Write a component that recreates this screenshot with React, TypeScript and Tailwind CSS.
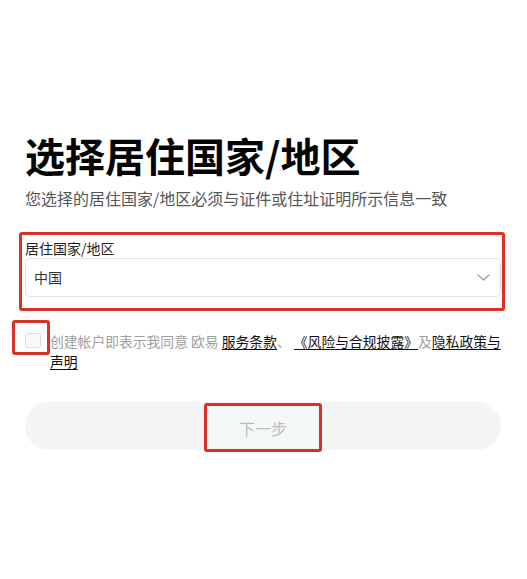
const font = { fontFamily: '"Noto Sans CJK SC", "Noto Sans", sans-serif' };

const Chevron = () => (
  <svg width="13" height="7" viewBox="0 0 13 7" fill="none">
    <path d="M1 1L6.5 6L12 1" stroke="#9a9a9a" strokeWidth="1.2" strokeLinecap="round" strokeLinejoin="round" />
  </svg>
);

export default function App() {
  return (
    <div style={font} className="h-[579px] w-[527px] bg-white pl-[25px] pr-[25px] pt-[131px]">
      <h1 className="text-[40px] font-bold leading-[48px] text-[#050505]">选择居住国家/地区</h1>
      <p className="mt-[9px] text-[16px] leading-[20px] text-[#555]">
        您选择的居住国家/地区必须与证件或住址证明所示信息一致
      </p>

      {/* highlighted field */}
      <div className="-ml-[6px] mt-[24px] w-[486px] rounded-[3px] border-[3px] border-[#d9312a] pb-[11px] pl-[3px] pt-[3px]">
        <label className="block text-[14px] leading-[20px] text-[#222]">居住国家/地区</label>
        <div className="flex h-[39px] w-[476px] items-center justify-between rounded-[5px] border border-[#e2e2e2] bg-white pl-[8px] pr-[10px]">
          <span className="text-[14px] text-[#333]">中国</span>
          <Chevron />
        </div>
      </div>

      {/* agreement */}
      <div className="-ml-[13px] mt-[9px] flex items-start">
        <div className="h-[35px] w-[38px] shrink-0 rounded-[3px] border-[3px] border-[#d9312a] pl-[10px] pt-[10px]">
          <div className="h-[15px] w-[16px] rounded-[3px] border border-[#d6dcdf] bg-[#f6fafb]" />
        </div>
        <p className="mt-[11px] w-[458px] text-[13.8px] leading-[20px] text-[#a0a0a0]">
          创建帐户即表示我同意 欧易{" "}
          <a className="text-[#111] underline underline-offset-2">服务条款</a>、{" "}
          <a className="text-[#111] underline underline-offset-2">《风险与合规披露》</a>及
          <a className="text-[#111] underline underline-offset-2">隐私政策与声明</a>
        </p>
      </div>

      <button className="mt-[31px] flex h-[48px] w-[476px] items-start justify-center rounded-full bg-[#f5f5f5]">
        <span className="mt-[1px] flex h-[49px] w-[118px] items-center justify-center rounded-[3px] border-[3px] border-[#d9312a] bg-[#f4f7f7] text-[16px] text-[#bdbdbd]">
          下一步
        </span>
      </button>
    </div>
  );
}
